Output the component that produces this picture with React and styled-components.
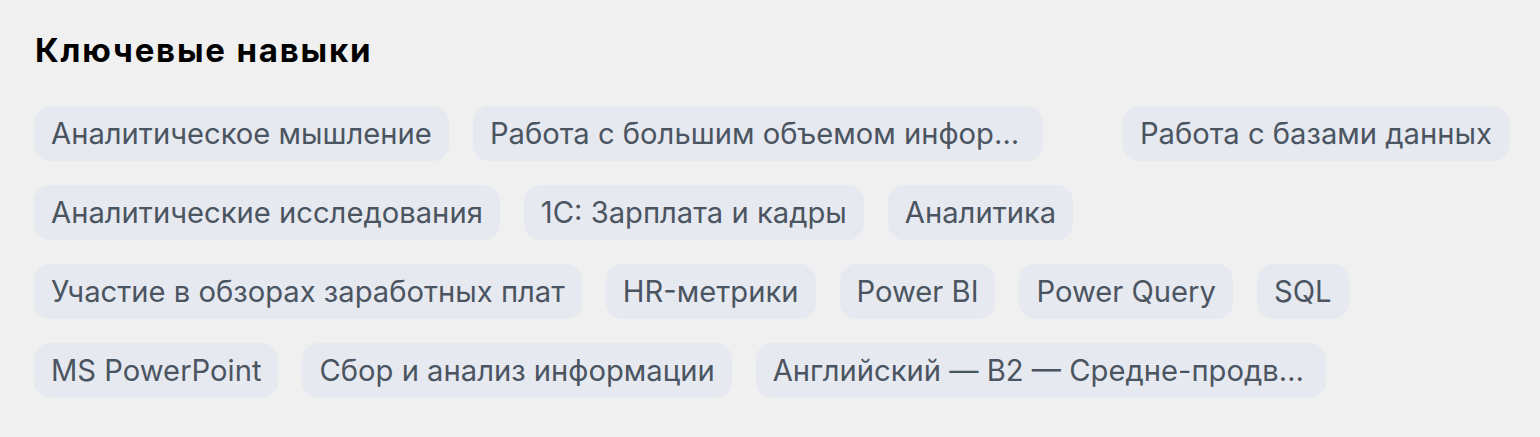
import { createGlobalStyle } from "styled-components"
import styled from "styled-components"

const skills = [
    { name: "Аналитическое мышление" },
    { name: "Работа с большим объемом информации", cut: true },
    { name: "Работа с базами данных" },
    { name: "Аналитические исследования" },
    { name: "1С: Зарплата и кадры" },
    { name: "Аналитика" },
    { name: "Участие в обзорах заработных плат" },
    { name: "HR-метрики" },
    { name: "Power BI" },
    { name: "Power Query" },
    { name: "SQL" },
    { name: "MS PowerPoint" },
    { name: "Сбор и анализ информации" },
    { name: "Английский — B2 — Средне-продвинутый", cut: true },
]

export default function App() {
    return (
        <>
            <GlobalStyle />
            <Section>
                <Title>Ключевые навыки</Title>
                <SkillsList>
                    {skills.map(({ name, cut }) => (
                        <Slot key={name} cut={cut}>
                            <Chip cut={cut}>
                                <ChipText>{name}</ChipText>
                            </Chip>
                        </Slot>
                    ))}
                </SkillsList>
            </Section>
        </>
    )
}

const GlobalStyle = createGlobalStyle`
    body {
        margin: 0;
        background: #f0f0f0;
        font-family: 'Inter', 'Noto Sans', sans-serif;
    }
`

const Section = styled.div`
    padding: 28px 34px 0 34px;
`

const Title = styled.h2`
    margin: 0 0 0 1px;
    font-size: 33px;
    line-height: 44px;
    letter-spacing: 1.8px;
    font-weight: 700;
    color: #000;
`

const SkillsList = styled.div`
    display: flex;
    flex-wrap: wrap;
    column-gap: 24px;
    row-gap: 24px;
    margin-top: 34px;
    width: 1480px;
`

const Slot = styled.div`
    display: flex;
    width: ${({ cut }) => (cut ? "626px" : "auto")};
`

const Chip = styled.div`
    display: flex;
    align-items: center;
    height: 55px;
    padding: 0 17px;
    box-sizing: border-box;
    border-radius: 16px;
    background: #e6e9f0;
    max-width: ${({ cut }) => (cut ? "570px" : "none")};
    overflow: hidden;
`

const ChipText = styled.span`
    font-size: 29.2px;
    color: #4b5561;
    white-space: nowrap;
    overflow: hidden;
    text-overflow: ellipsis;
`
